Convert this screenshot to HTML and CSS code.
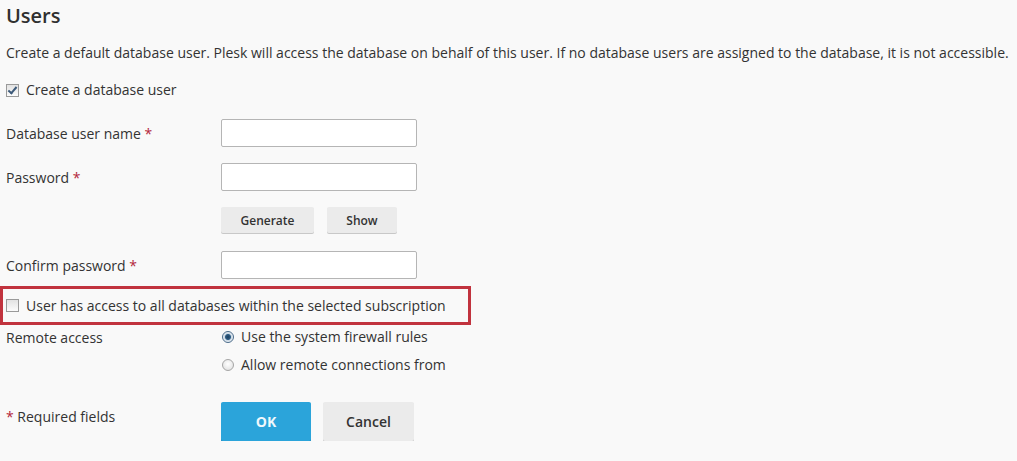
FILE: index.html
```html
<!DOCTYPE html>
<html>
<head>
<meta charset="utf-8">
<link rel="stylesheet" href="styles.css">
</head>
<body>
<div class="page">
  <h2 class="title">Users</h2>
  <p class="desc">Create a default database user. Plesk will access the database on behalf of this user. If no database users are assigned to the database, it is not accessible.</p>
  <label class="check-line first-check"><span class="cb checked"></span>Create a database user</label>

  <div class="row r-name">
    <div class="lbl">Database user name <span class="req">*</span></div>
    <div class="ctl"><span class="input"></span></div>
  </div>
  <div class="row r-pass">
    <div class="lbl">Password <span class="req">*</span></div>
    <div class="ctl"><span class="input"></span></div>
  </div>
  <div class="row r-btns">
    <div class="lbl"></div>
    <div class="ctl btns"><span class="btn gen">Generate</span><span class="btn show">Show</span></div>
  </div>
  <div class="row r-confirm">
    <div class="lbl">Confirm password <span class="req">*</span></div>
    <div class="ctl"><span class="input"></span></div>
  </div>

  <div class="highlight">
    <label class="check-line"><span class="cb"></span>User has access to all databases within the selected subscription</label>
  </div>

  <div class="row r-remote">
    <div class="lbl">Remote access</div>
    <div class="ctl radios">
      <div class="radio-line"><span class="radio on"></span>Use the system firewall rules</div>
      <div class="radio-line"><span class="radio"></span>Allow remote connections from</div>
    </div>
  </div>

  <div class="row r-footer">
    <div class="lbl req-note"><span class="req">*</span> Required fields</div>
    <div class="ctl footer-btns"><span class="btn ok">OK</span><span class="btn cancel">Cancel</span></div>
  </div>
</div>
</body>
</html>
```

FILE: styles.css
```css
html, body {
  margin: 0;
  padding: 0;
  background: #f9f9f9;
}
body {
  font-family: "Open Sans", "Liberation Sans", sans-serif;
  font-size: 14px;
  color: #333;
}
.page {
  padding: 0 0 0 6px;
  width: 1011px;
}
.title {
  margin: 0;
  padding-top: 3px;
  font-size: 20px;
  font-weight: 600;
  line-height: 26px;
  color: #303030;
}
.desc {
  margin: 15px 0 0 0;
  line-height: 18px;
  white-space: nowrap;
}
.check-line {
  display: flex;
  align-items: center;
  line-height: 18px;
}
.first-check {
  margin-top: 19px;
}
.cb {
  width: 11px;
  height: 11px;
  border: 1px solid #9a9a9a;
  background: linear-gradient(#e2e2e2, #fbfbfb);
  margin-right: 7px;
  position: relative;
  flex: none;
}
.cb.checked::after {
  content: "";
  position: absolute;
  left: 3px;
  top: 0px;
  width: 3px;
  height: 7px;
  border: solid #3d5a7a;
  border-width: 0 2px 2px 0;
  transform: rotate(40deg);
}
.row {
  display: flex;
}
.lbl {
  width: 215px;
  flex: none;
  line-height: 18px;
}
.req {
  color: #b3263a;
}
.input {
  display: block;
  width: 194px;
  height: 26px;
  border: 1px solid #b5b5b5;
  border-radius: 2px;
  background: #fff;
}
.r-name {
  margin-top: 20px;
}
.r-name .lbl, .r-pass .lbl, .r-confirm .lbl {
  padding-top: 6px;
}
.r-pass {
  margin-top: 16px;
}
.r-btns {
  margin-top: 16px;
}
.btns {
  display: flex;
  gap: 13px;
}
.btn {
  display: inline-flex;
  align-items: center;
  justify-content: center;
  box-sizing: border-box;
  background: #ebebeb;
  border-radius: 2px;
  box-shadow: 0 1px 0 #c8c8c8;
  color: #333;
  font-weight: 600;
}
.btns .btn {
  height: 26px;
  font-size: 12px;
}
.gen { width: 93px; }
.show { width: 70px; }
.r-confirm {
  margin-top: 18px;
}
.highlight {
  margin: 7px 0 0 -6px;
  width: 471px;
  height: 39px;
  box-sizing: border-box;
  border: 3px solid #c1333e;
  padding-left: 3px;
  display: flex;
  align-items: center;
}
.r-remote {
  margin-top: 3px;
}
.r-remote .lbl {
  padding-top: 1px;
}
.radios {
  display: flex;
  flex-direction: column;
  gap: 10px;
}
.radio-line {
  display: flex;
  align-items: center;
  line-height: 18px;
}
.radio {
  width: 10px;
  height: 10px;
  border-radius: 50%;
  border: 1px solid #a5a5a5;
  background: radial-gradient(circle at 50% 40%, #fff, #dcdcdc);
  margin: 0 7px 0 1px;
  position: relative;
  flex: none;
}
.radio.on {
  border-color: #4a6b8a;
  background: radial-gradient(circle, #1d3f5e 0, #2d5b82 2.5px, #c9d7e3 3.5px, #eef2f6 5px);
}
.r-footer {
  margin-top: 28px;
}
.req-note {
  padding-top: 6px;
}
.footer-btns {
  display: flex;
  gap: 12px;
}
.footer-btns .btn {
  height: 39px;
  font-size: 14px;
}
.ok {
  width: 90px;
  background: #2ba4da;
  color: #f0f8fc;
  box-shadow: 0 1px 0 #1e86b6;
  font-weight: 700;
}
.cancel {
  width: 91px;
}
```
